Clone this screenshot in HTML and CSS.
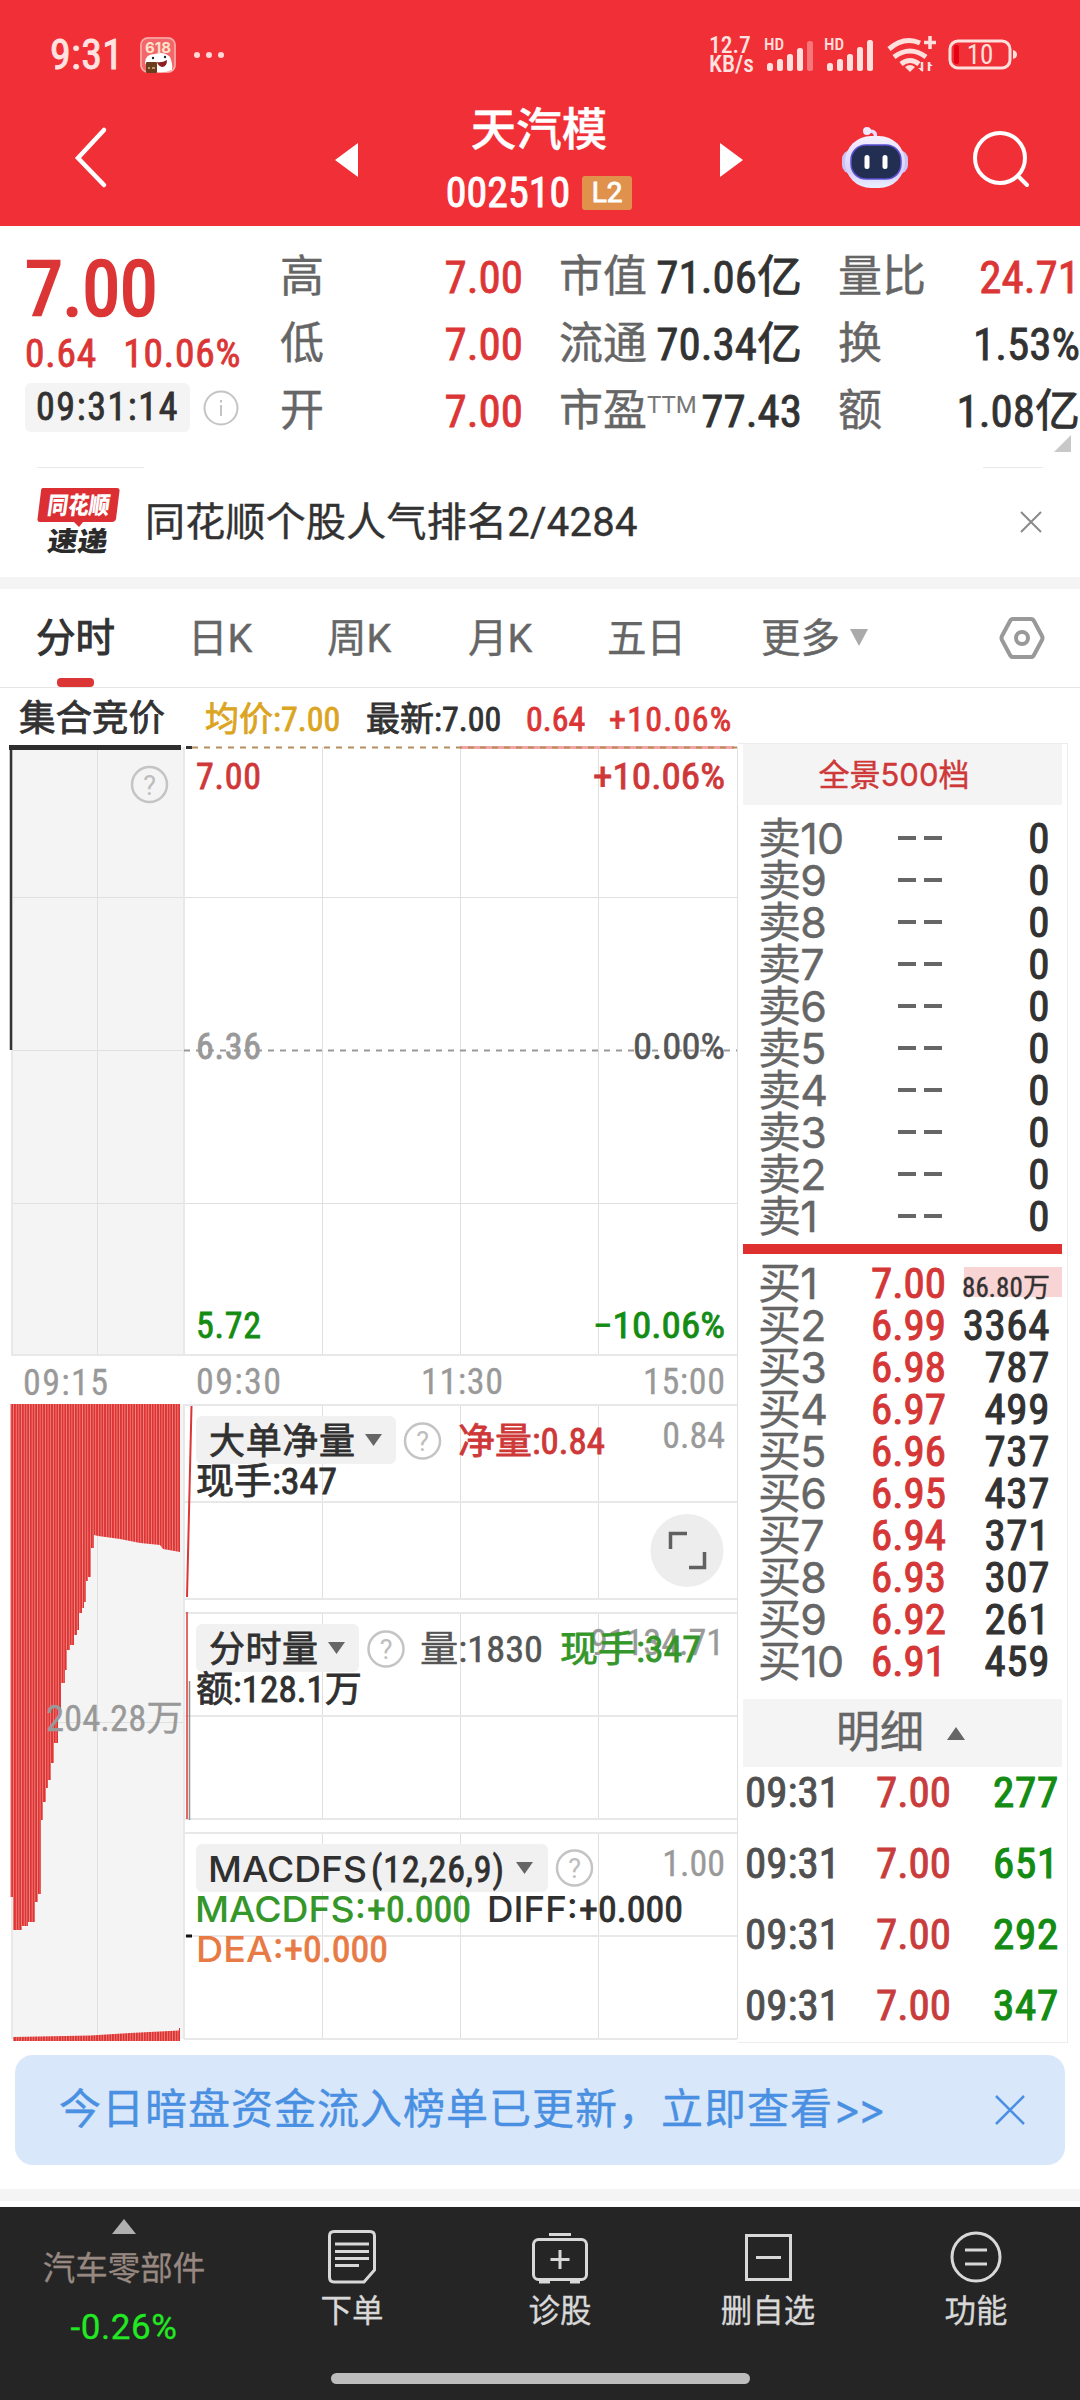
FILE: index.html
```html
<!DOCTYPE html>
<html lang="zh-CN">
<head>
<meta charset="utf-8">
<title>天汽模 002510</title>
<link rel="stylesheet" href="styles.css">
</head>
<body>
<header class="top">
  <div class="status">
    <span class="clock">9:31</span>
    <svg class="app-badge" width="36" height="36" viewBox="0 0 36 36">
      <rect width="36" height="36" rx="8" fill="#f3666c"/>
      <rect x="1" y="1" width="34" height="34" rx="7" fill="none" stroke="#f9b0a8" stroke-width="1.5"/>
      <text x="18" y="16" text-anchor="middle" class="badge-num">618</text>
      <path d="M5 26Q5 17 15 17Q24 14 30 20Q33 27 32 33Q25 36 17 35Q7 32 5 26Z" fill="#fff"/>
      <circle cx="13" cy="21" r="1.2" fill="#222"/><circle cx="25" cy="20" r="1.2" fill="#222"/>
      <path d="M17 25Q22 26 27 23Q27 30 22 30Q18 29 17 25Z" fill="#8c1d20"/>
      <rect x="6" y="25" width="11" height="11" rx="1" fill="#6b3d1c"/>
      <path d="M8 31h2M12 31h3" stroke="#d8b48a" stroke-width="1.5"/>
    </svg>
    <svg class="dots" width="32" height="8" viewBox="0 0 32 8" fill="#ffd9d6"><circle cx="4" cy="4" r="3"/><circle cx="16" cy="4" r="3"/><circle cx="28" cy="4" r="3"/></svg>
    <span class="speed"><span>12.7</span><span>KB/s</span></span>
    <svg class="signals" width="312" height="40" viewBox="764 35 312 40" fill="#ffe0dd">
      <text x="766" y="50" class="hd">HD</text>
      <rect x="769" y="63" width="6" height="8" rx="2.500"/><rect x="779" y="59" width="6" height="12" rx="2.500"/><rect x="789" y="54" width="6" height="17" rx="2.500"/><rect x="799" y="48" width="6" height="23" rx="2.500"/><rect x="809" y="41" width="6" height="30" rx="2.500" opacity=".4"/>
      <text x="826" y="50" class="hd">HD</text>
      <rect x="829" y="63" width="6" height="8" rx="2.500"/><rect x="839" y="59" width="6" height="12" rx="2.500"/><rect x="849" y="54" width="6" height="17" rx="2.500"/><rect x="859" y="47" width="6" height="24" rx="2.500"/><rect x="869" y="40" width="6" height="31" rx="2.500"/>
      <g transform="translate(2 0)">
      <g fill="none" stroke="#ffe0dd" stroke-width="5">
        <path d="M889 49Q904 36 920 43"/><path d="M894 57Q910 45 926 57"/><path d="M901 64Q910 57 919 64"/>
        <path d="M930 36v13M924 42.500h12" stroke-width="3.500"/>
        <path d="M922 71v-9M929 62v9" stroke-width="2.500"/>
      </g>
      <path d="M905 67Q910 63 915 67L910 72Z"/>
      <path d="M918 68h5v4zM933 66h-5v-4z"/>
      <rect x="950" y="41" width="60" height="27" rx="8" fill="none" stroke="#ffe0dd" stroke-width="3"/>
      <rect x="954" y="45" width="5" height="19" rx="2" fill="#e50012"/>
      <path d="M1013 50q4 1 4 4.500t-4 4.500z"/>
      <text x="980" y="64" text-anchor="middle" class="batt">10</text>
      </g>
    </svg>
  </div>
  <div class="titlebar">
    <svg class="back" width="40" height="64" viewBox="70 125 40 64"><path d="M104 130L78 158L104 185" fill="none" stroke="#fff" stroke-width="4.500" stroke-linecap="round"/></svg>
    <svg class="prev" width="24" height="34" viewBox="0 0 24 34"><path d="M23 0V34L0 17Z" fill="#fff"/></svg>
    <div class="title">
      <div class="name">天汽模</div>
      <div class="code"><span>002510</span><b>L2</b></div>
    </div>
    <svg class="next" width="24" height="34" viewBox="0 0 24 34"><path d="M0 0V34L23 17Z" fill="#fff"/></svg>
    <svg class="robot" width="68" height="64" viewBox="840 126 68 64">
      <defs><linearGradient id="rb" x1="0" y1="0" x2="0" y2="1"><stop offset="0" stop-color="#f6f1ff"/><stop offset=".7" stop-color="#d9d0fb"/><stop offset="1" stop-color="#e9f0ff"/></linearGradient></defs>
      <path d="M874 138q2-7-6-7" fill="none" stroke="#e8defc" stroke-width="3.500"/><circle cx="866" cy="131" r="4" fill="#f3e9ff"/>
      <rect x="841" y="150" width="66" height="24" rx="9" fill="#c9c4f6"/>
      <rect x="844" y="136" width="60" height="52" rx="26" fill="url(#rb)"/>
      <rect x="850" y="145" width="50" height="34" rx="15" fill="#222f52" stroke="#5b4fd0" stroke-width="1.500"/>
      <rect x="863.500" y="155" width="5" height="14" rx="2.500" fill="#fff"/><rect x="881.500" y="155" width="5" height="14" rx="2.500" fill="#fff"/>
    </svg>
    <svg class="search" width="58" height="58" viewBox="972 131 58 58" fill="none" stroke="#fff" stroke-width="4" stroke-linecap="round"><circle cx="1000" cy="158" r="25"/><path d="M1019 177L1027 185"/></svg>
  </div>
</header>

<section class="quote">
  <div class="last">
    <div class="price">7.00</div>
    <div class="change"><span>0.64</span><span>10.06%</span></div>
    <div class="time"><span class="stamp">09:31:14</span>
      <svg width="36" height="36" viewBox="0 0 36 36" fill="none" stroke="#c4c4c4" stroke-width="2"><circle cx="18" cy="18" r="16.500"/><path d="M18 15V26M18 10v2.500"/></svg>
    </div>
  </div>
  <dl class="stats">
    <div><dt>高</dt><dd class="up">7.00</dd></div>
    <div><dt>市值</dt><dd>71.06亿</dd></div>
    <div><dt>量比</dt><dd class="up">24.71</dd></div>
    <div><dt>低</dt><dd class="up">7.00</dd></div>
    <div><dt>流通</dt><dd>70.34亿</dd></div>
    <div><dt>换</dt><dd>1.53%</dd></div>
    <div><dt>开</dt><dd class="up">7.00</dd></div>
    <div><dt>市盈<sup>TTM</sup></dt><dd>77.43</dd></div>
    <div><dt>额</dt><dd>1.08亿</dd></div>
  </dl>
  <i class="corner"></i>
</section>

<section class="notice">
  <svg class="logo" width="84" height="70" viewBox="36 487 84 70">
    <path d="M43 489H117Q120 489 119.500 492L116 520Q115 523 112 523H83L79 528L74 523H40Q37 523 37.500 520L41 492Q41 489 43 489Z" fill="#dc2f33"/>
    <g transform="skewX(-8)"><text x="119" y="515" class="logo-a" textLength="62" lengthAdjust="spacingAndGlyphs">同花顺</text><text x="124" y="552" class="logo-b" textLength="60" lengthAdjust="spacingAndGlyphs">速递</text></g>
  </svg>
  <span class="notice-text">同花顺个股人气排名2/4284</span>
  <svg class="close" width="22" height="22" viewBox="0 0 22 22" stroke="#8a8a8a" stroke-width="2"><path d="M1 1L21 21M21 1L1 21"/></svg>
</section>

<nav class="tabs">
  <span class="tab active">分时</span><span class="tab">日K</span><span class="tab">周K</span><span class="tab">月K</span><span class="tab">五日</span><span class="tab">更多<i></i></span>
  <svg class="gear" width="46" height="44" viewBox="0 0 46 44" fill="none" stroke="#999" stroke-width="4"><path d="M14 3H32Q34 3 35 5L43 20Q44 22 43 24L35 39Q34 41 32 41H14Q12 41 11 39L3 24Q2 22 3 20L11 5Q12 3 14 3Z"/><circle cx="23" cy="22" r="6"/></svg>
</nav>

<div class="legend"><span class="auction">集合竞价</span><span class="avg">均价:7.00</span><span class="new">最新:7.00</span><span class="up c1">0.64</span><span class="up pct">+10.06%</span></div>

<main class="board">
<svg class="chart" width="738" height="1305" viewBox="0 742 738 1305">
  <defs><pattern id="bars" x="10.500" y="0" width="2.650" height="10" patternUnits="userSpaceOnUse"><rect width="2.650" height="10" fill="#dd3333"/><rect width=".7" height="10" fill="#f39a94"/></pattern>
  <g id="ask"><circle r="17.500" fill="none" stroke="#c4c4c4" stroke-width="2.500"/><text y="10" text-anchor="middle" class="q">?</text></g></defs>
  <rect x="12" y="747" width="172" height="608" fill="#f4f4f4"/>
  <rect x="12" y="1404" width="172" height="635" fill="#f4f4f4"/>
  <g stroke="#e0e0e0" stroke-width="1" fill="none">
    <path d="M97.500 747V1355M322.500 747V1355M460.500 747V1355M598.500 747V1355M12 897.500H737M12 1050.500H184M12 1203.500H737"/>
    <path d="M97.500 1404V2039M12 1722.500H184"/>
    <path d="M322.500 1404V1600M460.500 1404V1600M598.500 1404V1600M322.500 1612V1820M460.500 1612V1820M598.500 1612V1820M322.500 1832V2039M460.500 1832V2039M598.500 1832V2039M737.500 747V2039"/>
  </g>
  <g stroke="#e8e8e8" stroke-width="2" fill="none">
    <path d="M12 747V1355H737M12 2039V1404M184 747V1355M184 1404V2039"/>
    <path d="M184 1405H737M184 1502H737M184 1599H737M184 1613H737M184 1716H737M184 1819H737M184 1833H737M184 1936H737M184 2039H737"/>
  </g>
  <path d="M460 747.500H734" stroke="#f3a5a5" stroke-width="3"/>
  <path d="M192 747.500H737" stroke="#b58e5c" stroke-width="2" stroke-dasharray="6 6"/>
  <path d="M186 747.500h6" stroke="#333" stroke-width="3"/>
  <path d="M184 1050.500H737" stroke="#999" stroke-width="2" stroke-dasharray="6 6"/>
  <path d="M11 747V1050" stroke="#333" stroke-width="2.500"/><path d="M9 747.500H181" stroke="#2e2e2e" stroke-width="5"/>
  <use href="#ask" x="149.500" y="784.500"/>
  <g class="n s36">
    <text x="196" y="789" class="fr" textLength="65">7.00</text><text x="593" y="789" class="fr" textLength="132" lengthAdjust="spacingAndGlyphs">+10.06%</text>
    <text x="196" y="1059" class="md" textLength="65">6.36</text><text x="633" y="1059" class="mid" textLength="92" lengthAdjust="spacingAndGlyphs">0.00%</text>
    <text x="196" y="1338" class="fg" textLength="65">5.72</text><text x="593" y="1338" class="fg" textLength="132" lengthAdjust="spacingAndGlyphs">−10.06%</text>
    <g class="t"><text x="23" y="1395" textLength="85">09:15</text><text x="196" y="1394" textLength="85">09:30</text><text x="421" y="1394" textLength="82">11:30</text><text x="643" y="1394" textLength="82">15:00</text></g>
  </g>
  <path fill="url(#bars)" d="M10.500 1404H180V1552L163 1549L160 1545L140 1543L120 1539L98 1536L94 1535V1548H91V1577H88V1581H86V1602H84V1608H82V1613H79V1630H77V1635H74V1645H70V1650H67V1670H65V1683H61V1715H58V1743H54V1763H51V1780H48V1788H46V1802H43V1820H41V1894H38V1902H35V1922H28V1926H22V1930H13V1897H10.500Z"/>
  <path fill="url(#bars)" d="M13 2037L90 2035.500L130 2033L179 2030.500V2028H180V2041H13Z"/>
  <text x="46" y="1731" class="n s36 t" textLength="137" lengthAdjust="spacingAndGlyphs">204.28万</text>
  <path d="M187 1597L191.500 1406" stroke="#dc3535" stroke-width="2"/>
  <path d="M187 1612V1819" stroke="#dc3535" stroke-width="1.500"/><path d="M189.500 1681V1820" stroke="#8f8f8f" stroke-width="1.500"/>
  <path d="M186 1936H192" stroke="#111" stroke-width="3"/>
  <g fill="#f1f1f1"><rect x="196" y="1416" width="200" height="48" rx="6"/><rect x="196" y="1624" width="163" height="48" rx="6"/><rect x="196" y="1844" width="352" height="48" rx="6"/></g>
  <g fill="#666"><path d="M365 1434H382L373.500 1446Z"/><path d="M328 1642H345L336.500 1654Z"/><path d="M516 1862H533L524.500 1874Z"/></g>
  <use href="#ask" x="422.500" y="1441"/><use href="#ask" x="386" y="1649"/><use href="#ask" x="574.500" y="1868"/>
  <g class="n s36 dk">
    <text x="209" y="1454" textLength="146">大单净量</text>
    <text x="458" y="1454" class="fr" textLength="147" lengthAdjust="spacingAndGlyphs">净量:0.84</text>
    <text x="725" y="1448" class="t" text-anchor="end">0.84</text>
    <text x="196" y="1494" textLength="141" lengthAdjust="spacingAndGlyphs">现手:347</text>
    <text x="209" y="1662" textLength="109">分时量</text>
    <text x="420" y="1662" class="mid" textLength="123" lengthAdjust="spacingAndGlyphs">量:1830</text>
    <text x="590" y="1655" class="t" textLength="134" lengthAdjust="spacingAndGlyphs">91134.71</text>
    <text x="560" y="1662" class="lg" textLength="141" lengthAdjust="spacingAndGlyphs">现手:347</text>
    <text x="196" y="1702" textLength="166" lengthAdjust="spacingAndGlyphs">额:128.1万</text>
    <text x="208" y="1882" class="i" textLength="159" lengthAdjust="spacingAndGlyphs">MACDFS</text><text x="371" y="1882" textLength="133">(12,26,9)</text>
    <text x="725" y="1876" class="t" text-anchor="end">1.00</text>
    <text x="195" y="1922" class="i lg" textLength="171" lengthAdjust="spacingAndGlyphs">MACDFS:</text><text x="367" y="1922" class="lg" textLength="104" lengthAdjust="spacingAndGlyphs">+0.000</text>
    <text x="487" y="1922" class="i" textLength="91" lengthAdjust="spacingAndGlyphs">DIFF:</text><text x="579" y="1922" textLength="104" lengthAdjust="spacingAndGlyphs">+0.000</text>
    <text x="196" y="1962" class="i or" textLength="88" lengthAdjust="spacingAndGlyphs">DEA:</text><text x="284" y="1962" class="or" textLength="104" lengthAdjust="spacingAndGlyphs">+0.000</text>
  </g>
  <circle cx="687" cy="1550.500" r="36.500" fill="#ededed"/>
  <path d="M670.500 1549V1533.500H687M704.500 1552V1567.500H689" fill="none" stroke="#606060" stroke-width="3.500"/>
</svg>
<aside class="book">
  <div class="depth">全景500档</div>
  <ul class="rows asks">
    <li><span>卖10</span><i></i><b>0</b></li><li><span>卖9</span><i></i><b>0</b></li><li><span>卖8</span><i></i><b>0</b></li><li><span>卖7</span><i></i><b>0</b></li><li><span>卖6</span><i></i><b>0</b></li><li><span>卖5</span><i></i><b>0</b></li><li><span>卖4</span><i></i><b>0</b></li><li><span>卖3</span><i></i><b>0</b></li><li><span>卖2</span><i></i><b>0</b></li><li><span>卖1</span><i></i><b>0</b></li>
  </ul>
  <div class="divider"></div>
  <ul class="rows bids">
    <li class="big"><span>买1</span><em>7.00</em><b>86.80万</b></li><li><span>买2</span><em>6.99</em><b>3364</b></li><li><span>买3</span><em>6.98</em><b>787</b></li><li><span>买4</span><em>6.97</em><b>499</b></li><li><span>买5</span><em>6.96</em><b>737</b></li><li><span>买6</span><em>6.95</em><b>437</b></li><li><span>买7</span><em>6.94</em><b>371</b></li><li><span>买8</span><em>6.93</em><b>307</b></li><li><span>买9</span><em>6.92</em><b>261</b></li><li><span>买10</span><em>6.91</em><b>459</b></li>
  </ul>
  <div class="detail-head">明细<i></i></div>
  <ul class="trades">
    <li><span>09:31</span><em>7.00</em><b>277</b></li><li><span>09:31</span><em>7.00</em><b>651</b></li><li><span>09:31</span><em>7.00</em><b>292</b></li><li><span>09:31</span><em>7.00</em><b>347</b></li>
  </ul>
</aside>
</main>

<div class="banner"><span>今日暗盘资金流入榜单已更新，立即查看<u>&gt;&gt;</u></span>
  <svg width="30" height="30" viewBox="0 0 30 30" stroke="#4a90e2" stroke-width="2.500"><path d="M1 1L29 29M29 1L1 29"/></svg></div>
<div class="band"></div>

<footer class="bottom">
  <div class="industry"><i></i><span>汽车零部件</span><b>-0.26%</b></div>
  <div class="act"><svg width="60" height="58" viewBox="322 2228 60 58"><path d="M334 2231.500H370Q374.500 2231.500 374.500 2236V2270L364 2282H334Q329.500 2282 329.500 2277V2236Q329.500 2231.500 334 2231.500ZM335 2244H369M335 2251.500H369M335 2258.500H369M335 2265.500H359"/></svg>下单</div>
  <div class="act"><svg width="60" height="58" viewBox="530 2228 60 58"><rect x="533.500" y="2239.500" width="53" height="40" rx="5"/><path d="M549 2234.500H571M560 2250V2269M550.500 2259.500H569.500M539 2282h11M570 2282h10"/></svg>诊股</div>
  <div class="act"><svg width="60" height="58" viewBox="738 2228 60 58"><rect x="746.500" y="2235.500" width="44" height="44"/><path d="M756 2257.500H781"/></svg>删自选</div>
  <div class="act"><svg width="60" height="58" viewBox="946 2228 60 58"><circle cx="976" cy="2257" r="24"/><path d="M965 2250H987M965 2264H987"/></svg>功能</div>
  <i class="home"></i>
</footer>
</body>
</html>
```
FILE: styles.css
```css
*{box-sizing:border-box;margin:0;padding:0}
body{width:1080px;height:2400px;overflow:hidden;background:#fff;font-family:Roboto,"Noto Sans CJK SC",sans-serif;color:#323232;-webkit-text-stroke:.4px}
svg{display:block;flex:none;-webkit-text-stroke:0}
ul{list-style:none}
i,em,b,u{font-style:normal;text-decoration:none}
.up{color:#dc3535}

.top{height:226px;background:#f12f37;color:#fff}
.status{height:90px;padding:19px 0 0 50px;display:flex;align-items:center;color:#ffe3e0}
.clock{width:90px;font:400 42px/60px "Roboto Condensed";letter-spacing:.3px;-webkit-text-stroke:.9px}
.dots{margin-left:17px}
.badge-num{font:700 15px Inter;fill:#ffe3c8}
.speed{margin-left:484px;width:53px;display:flex;flex-direction:column;font:500 23.500px/19px "Roboto Condensed";-webkit-text-stroke:0}
.signals text{fill:#ffe0dd}
.hd{font:500 17px "Roboto Condensed"}
.batt{font:400 27px "Roboto Condensed"}
.titlebar{height:136px;display:flex;align-items:flex-start;padding-left:70px}
.back{margin-top:35px}
.prev{margin:53px 0 0 225px}
.title{width:360px;text-align:center}
.name{font-size:45.500px;font-weight:500;line-height:60px;margin-top:11px}
.code{display:flex;justify-content:center;gap:12px;align-items:center;height:34px;margin-top:15px;font:400 42px/34px "Roboto Condensed";-webkit-text-stroke:.9px}
.code b{width:50px;height:34px;border-radius:3px;background:#e0924d;font:400 28px/34px Roboto}
.next{margin:53px 0 0 1px}
.robot{margin:36px 0 0 97px}
.search{margin:41px 0 0 63px}

.quote{height:236px;display:flex;position:relative;-webkit-text-stroke:.8px}
.last{width:281px;padding:19px 0 0 25px;font-family:"Roboto Condensed";color:#dc3535}
.price{font-size:76px;font-weight:400;line-height:88px;-webkit-text-stroke:2.500px}
.change{display:flex;gap:26px;font-size:39.500px;line-height:42px;letter-spacing:.8px}
.time{display:flex;align-items:center;gap:13px;margin-top:8px}
.stamp{width:165px;height:49px;border-radius:6px;background:#f4f4f4;color:#323232;text-align:center;font:400 38px/49px "Roboto Condensed";letter-spacing:1.600px}
.stats{width:799px;display:grid;grid-template-columns:242px 242px 241px;column-gap:37px;grid-auto-rows:67px;padding-top:18px;line-height:67px}
.stats div{display:flex;justify-content:space-between;white-space:nowrap}
.stats dt{font-size:44px;color:#666;-webkit-text-stroke:.4px;margin-left:-1px}
.stats dd{font-family:"Roboto Condensed","Noto Sans CJK SC";font-size:45px;letter-spacing:0}
.stats sup{font-size:24px;line-height:0;vertical-align:13px;font-weight:400;color:#777;-webkit-text-stroke:0}
.corner{position:absolute;right:9px;bottom:10px;border-left:17px solid transparent;border-bottom:17px solid #c8c8c8}

.notice{height:115px;display:flex;align-items:center;padding:0 38px 0 36px;background:linear-gradient(#e8e8e8,#e8e8e8) 37px 5px/107px 1px no-repeat,linear-gradient(#e8e8e8,#e8e8e8) 983px 5px/60px 1px no-repeat}
.logo{margin-top:3px}
.logo-a{font:900 24px "Noto Sans CJK SC";fill:#fff}
.logo-b{font:900 27px "Noto Sans CJK SC";fill:#2b2b2b}
.notice-text{flex:1;margin:6px 0 0 25px;font-size:40px;line-height:60px;letter-spacing:.25px}
.close{margin-top:4px}

.tabs{height:111px;border-top:12px solid #f4f4f4;border-bottom:1px solid #e5e5e5;position:relative;display:flex;align-items:center;padding:0 35px 0 36px;color:#666;font-size:39.500px}
.tab{height:98px;line-height:99px;position:relative;margin-right:75px;white-space:nowrap}
.tab:nth-child(1){margin-right:73px}
.tab:nth-child(2),.tab:nth-child(3),.tab:nth-child(4){width:64px}
.tab:nth-child(3){margin-right:77px}
.tab.active{color:#323232;-webkit-text-stroke:1px}
.tab.active::after{content:"";position:absolute;left:21px;bottom:0;width:37px;height:9px;border-radius:4px;background:#dc3535}
.tab i{display:inline-block;border:9px solid transparent;border-top:17px solid #aaa;border-bottom:0;margin-left:10px;vertical-align:6px}
.gear{margin-left:auto}

.legend{height:54px;padding-left:19px;display:flex;font:400 34px/62px "Roboto Condensed","Noto Sans CJK SC";-webkit-text-stroke:.8px}
.auction{width:186px;font-size:36.500px}
.avg{width:161px;color:#dba521}
.new{width:160px}
.c1{width:83px}
.pct{letter-spacing:1.300px}

.board{height:1305px;display:flex}
.n{font-family:"Roboto Condensed","Noto Sans CJK SC";font-weight:400;stroke-width:.8px}
.s36{font-size:36px}
.dk{fill:#303030;stroke:#303030}
.fr{fill:#cf3838;stroke:#cf3838}
.fg{fill:#148c14;stroke:#148c14}
.t{fill:#999;stroke:#999;stroke-width:.3px}
.md{fill:#999;stroke:#999}
.mid{fill:#555;stroke:#555;stroke-width:.5px}
.lg{fill:#35962a;stroke:#35962a}
.or{fill:#e87b45;stroke:#e87b45}
.i{font-family:Inter;font-weight:500;stroke-width:0}
.q{font:400 27px Roboto;fill:#bdbdbd}
.book{width:330px;height:1300px;margin-top:1px;border:1px solid #ececec;border-left:0;padding:0 5px}
.depth{height:61px;background:#f4f4f4;text-align:center;padding-right:17px;font:400 31px/61px Inter,"Noto Sans CJK SC";color:#cf3838}
.rows li{height:42px;line-height:42px;display:flex;align-items:center;padding:0 12px 0 15px}
.rows span{width:113px;white-space:nowrap;font:400 43px/43px Inter,"Noto Sans CJK SC";color:#666;letter-spacing:-.8px}
.asks{padding-top:12px;height:439px}
.asks i{width:44px;height:4px;margin:0 0 0 27px;background:linear-gradient(90deg,#666 18px,transparent 18px 26px,#666 26px)}
.rows b{margin-left:auto;font:400 43px/42px "Roboto Condensed","Noto Sans CJK SC";letter-spacing:.6px;-webkit-text-stroke:1px}
.divider{height:10px;background:#df3030}
.bids{padding-top:8px;height:445px}
.rows em{font:400 43px/42px "Roboto Condensed";color:#d53636;-webkit-text-stroke:1px}
.rows .big b{font-size:27px;font-weight:400;line-height:52px;height:42px;letter-spacing:.1px;-webkit-text-stroke:.4px}
.rows .big{background:linear-gradient(#f8d4d4,#f8d4d4) 221px 5px/98px 30px no-repeat}
.detail-head{height:68px;background:#f4f4f4;display:flex;align-items:center;padding-left:93px;font-size:44px;color:#666;line-height:70px}
.detail-head i{border:9px solid transparent;border-bottom:13px solid #666;border-top:0;margin-left:23px}
.trades{margin-top:-10px}
.trades li{height:71px;padding:0 3px 0 2px;display:flex;align-items:center;font:400 43px/71px "Roboto Condensed";-webkit-text-stroke:.9px}
.trades span{width:131px;color:#505050}
.trades em{color:#c83c3c}
.trades b{margin-left:auto;color:#148c14;font-weight:400;letter-spacing:.8px;-webkit-text-stroke:1.200px}

.banner{height:110px;margin:8px 15px 0;border-radius:18px;background:#d9e7fa;display:flex;justify-content:space-between;align-items:center;padding:0 40px 0 44px;color:#4a90e2;font-size:42px;letter-spacing:1px}
.banner span{line-height:60px;height:62px}
.banner u{font-family:Inter;letter-spacing:-3px}
.band{height:12px;margin-top:24px;background:#f4f4f4}
.bottom{height:193px;margin-top:6px;background:#252525;position:relative;display:flex;color:#d8d8d8;-webkit-text-stroke:.3px}
.industry{width:248px;padding:12px 0 0 0;display:flex;flex-direction:column;align-items:center}
.industry i{border:12px solid transparent;border-bottom:15px solid #b0b0b0;border-top:0}
.industry span{font-size:32.500px;line-height:40px;margin-top:15px;color:#978881}
.industry b{font:400 35px/40px Roboto;color:#22ea22;margin-top:19px;letter-spacing:.6px}
.act{width:208px;padding-top:21px;text-align:center;font-size:31.500px;line-height:51px}
.act svg{margin:0 auto;fill:none;stroke:#d8d8d8;stroke-width:3}
.home{position:absolute;left:331px;bottom:16px;width:419px;height:11px;border-radius:6px;background:#bdbdbd}
```
